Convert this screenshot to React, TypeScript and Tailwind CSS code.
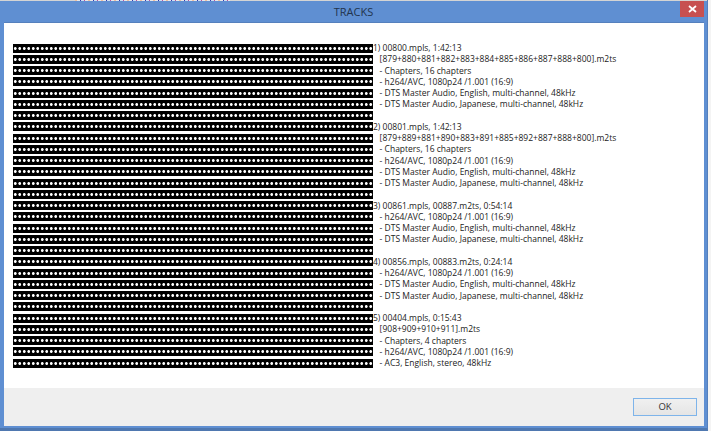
const font = { fontFamily: '"Open Sans", sans-serif' };
const lines: string[] = [
  '1) 00800.mpls, 1:42:13',
  '   [879+880+881+882+883+884+885+886+887+888+800].m2ts',
  '   - Chapters, 16 chapters',
  '   - h264/AVC, 1080p24 /1.001 (16:9)',
  '   - DTS Master Audio, English, multi-channel, 48kHz',
  '   - DTS Master Audio, Japanese, multi-channel, 48kHz',
  '',
  '2) 00801.mpls, 1:42:13',
  '   [879+889+881+890+883+891+885+892+887+888+800].m2ts',
  '   - Chapters, 16 chapters',
  '   - h264/AVC, 1080p24 /1.001 (16:9)',
  '   - DTS Master Audio, English, multi-channel, 48kHz',
  '   - DTS Master Audio, Japanese, multi-channel, 48kHz',
  '',
  '3) 00861.mpls, 00887.m2ts, 0:54:14',
  '   - h264/AVC, 1080p24 /1.001 (16:9)',
  '   - DTS Master Audio, English, multi-channel, 48kHz',
  '   - DTS Master Audio, Japanese, multi-channel, 48kHz',
  '',
  '4) 00856.mpls, 00883.m2ts, 0:24:14',
  '   - h264/AVC, 1080p24 /1.001 (16:9)',
  '   - DTS Master Audio, English, multi-channel, 48kHz',
  '   - DTS Master Audio, Japanese, multi-channel, 48kHz',
  '',
  '5) 00404.mpls, 0:15:43',
  '   [908+909+910+911].m2ts',
  '   - Chapters, 4 chapters',
  '   - h264/AVC, 1080p24 /1.001 (16:9)',
  '   - AC3, English, stereo, 48kHz',
];
export default function App() {
  return (
    <div className="w-[711px] h-[431px] overflow-hidden bg-[#f4f4f4]" style={font}>
      <div className="w-[708px] h-[431px] bg-[#5f8fd2] flex flex-col border-b-[3px] border-r border-[#4f78b0] border-r-[#5580bd]">
        <div className="h-[1px] shrink-0 bg-[#d4d4d4] pl-[75px]">
          <div className="h-[1px] w-[155px] bg-[repeating-linear-gradient(90deg,#f0c0a0_0px,#f0c0a0_2px,#e8e8e8_2px,#e8e8e8_5px,#3a3ab0_5px,#3a3ab0_6px,#d0e0f0_6px,#d0e0f0_9px,#c050a0_9px,#c050a0_10px,#e8e8e8_10px,#e8e8e8_13px)]" />
        </div>
        <div className="h-[21px] shrink-0 flex items-start relative">
          <div className="flex-1 text-center text-[11px] leading-[22px] text-[#22344e]">TRACKS</div>
          <div className="absolute right-[3px] top-0 w-[24px] h-[16px] bg-[#c75050] flex items-center justify-center">
            <svg width="9" height="8" viewBox="0 0 9 8"><path d="M1 1l7 6M8 1L1 7" stroke="#fff" strokeWidth="1.8" /></svg>
          </div>
        </div>
        <div className="ml-[4px] mr-[3px] flex-1 mb-[2px] bg-white flex flex-col border-t border-[#5580bd]">
          <div className="h-[365px] shrink-0 pl-[9px] pt-[20px]">
            <div className="grid grid-cols-[360px_1fr] auto-rows-[11.25px] text-[8.5px] text-[#222] whitespace-pre">
              {lines.map((t, i) => (
                <div key={i} className="contents">
                  <div className="h-[11.25px] pt-[0.5px]">
                    <div className="h-[9px] bg-black bg-[radial-gradient(circle_at_2.25px_4.5px,#fff_1px,transparent_1.8px),radial-gradient(circle_at_6.75px_4.5px,#fff_1px,transparent_1.8px)] bg-[length:9px_9px]" />
                  </div>
                  <div className="leading-[9.5px] h-[11.25px]">{t}</div>
                </div>
              ))}
            </div>
          </div>
          <div className="flex-1 bg-[#efefef] flex justify-end pt-[10px] pr-[7px]">
            <button className="w-[64px] h-[18px] border border-[#7eb4ea] bg-[linear-gradient(#f0f0f0,#e5e5e5)] text-[9.5px] leading-none text-[#333]">OK</button>
          </div>
        </div>
      </div>
    </div>
  );
}
